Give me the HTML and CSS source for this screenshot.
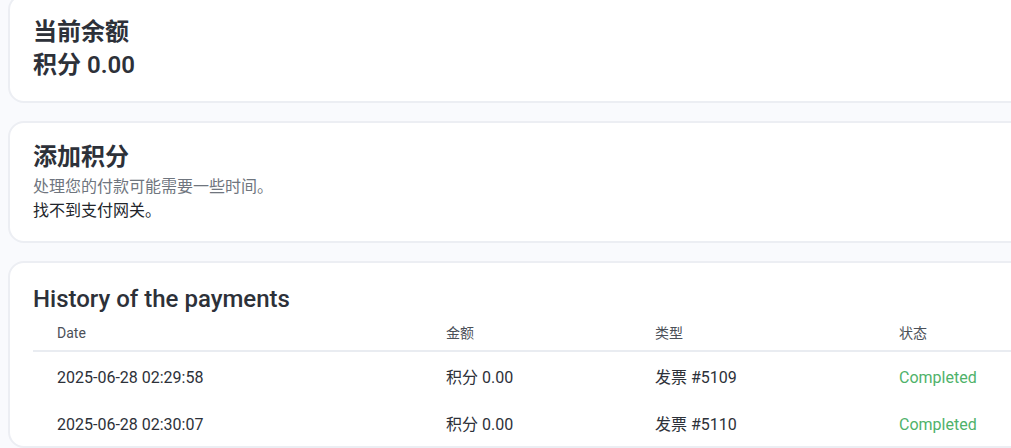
FILE: index.html
```html
<!DOCTYPE html>
<html lang="zh">
<head>
<meta charset="utf-8">
<title>余额</title>
<link rel="stylesheet" href="styles.css">
</head>
<body>
<div class="page">
  <section class="card card-balance">
    <h2 class="title">当前余额</h2>
    <h2 class="amount">积分 0.00</h2>
  </section>
  <section class="card card-add">
    <h2 class="title">添加积分</h2>
    <p class="muted">处理您的付款可能需要一些时间。</p>
    <p class="note">找不到支付网关。</p>
  </section>
  <section class="card card-history">
    <h3 class="history-title">History of the payments</h3>
    <table class="table">
      <colgroup>
        <col class="c-date"><col class="c-amount"><col class="c-type"><col class="c-status">
      </colgroup>
      <thead>
        <tr><th>Date</th><th>金额</th><th>类型</th><th>状态</th></tr>
      </thead>
      <tbody>
        <tr><td>2025-06-28 02:29:58</td><td>积分 0.00</td><td>发票 #5109</td><td class="ok">Completed</td></tr>
        <tr><td>2025-06-28 02:30:07</td><td>积分 0.00</td><td>发票 #5110</td><td class="ok">Completed</td></tr>
      </tbody>
    </table>
  </section>
</div>
</body>
</html>
```
FILE: styles.css
```css
html, body {
  margin: 0;
  padding: 0;
  overflow: hidden;
  background: #f9fafd;
}
body {
  font-family: Roboto, "Noto Sans CJK SC", sans-serif;
  color: #2d3139;
}
.page {
  width: 1180px;
  padding-left: 8px;
  display: flex;
  flex-direction: column;
  gap: 18px;
}
.card {
  background: #ffffff;
  border: 2px solid #eceef3;
  border-radius: 16px;
}
.card-balance {
  margin-top: -6px;
  padding: 22px 23px 21px;
}
.title, .amount {
  margin: 0;
  font-size: 24px;
  line-height: 29px;
  font-weight: 700;
  color: #2d3139;
}
.amount {
  margin-top: 4px;
  font-weight: 600;
}
.card-add {
  padding: 20px 23px 18px;
}
.card-add .title {
  margin-bottom: 3px;
}
.muted, .note {
  margin: 0;
  font-size: 16px;
  line-height: 24px;
}
.muted { color: #6f757e; }
.note { color: #22252b; }
.card-history {
  padding: 22px 23px 0;
}
.history-title {
  margin: 0;
  font-size: 24px;
  line-height: 28px;
  font-weight: 500;
  color: #2d3139;
}
.table {
  width: 100%;
  border-collapse: collapse;
  table-layout: fixed;
}
.c-date { width: 389px; }
.c-amount { width: 209px; }
.c-type { width: 244px; }
.table th {
  text-align: left;
  font-weight: 400;
  font-size: 14px;
  line-height: 18px;
  color: #4b5058;
  padding: 11px 24px 8px;
  border-bottom: 2px solid #e9ecf1;
}
.table td {
  font-size: 16px;
  line-height: 23px;
  color: #2d3139;
  padding: 14px 24px 10px;
}
.table td.ok {
  color: #4fb26a;
}
```
